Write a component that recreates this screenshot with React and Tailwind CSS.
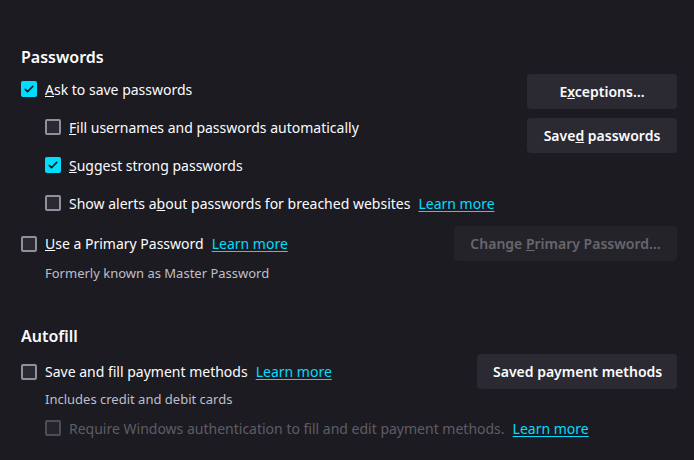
import React from 'react';

const Check = ({ checked, disabled }) => {
  if (checked) {
    return (
      <span className="flex h-4 w-4 shrink-0 items-center justify-center rounded-[2px] bg-[#00ddff]">
        <svg viewBox="0 0 16 16" className="h-3 w-3" fill="none" stroke="#1c1b22" strokeWidth="2.2" strokeLinecap="round" strokeLinejoin="round">
          <path d="M3 8.5l3 3 7-7" />
        </svg>
      </span>
    );
  }
  return (
    <span
      className={
        disabled
          ? 'h-4 w-4 shrink-0 rounded-[2px] border-2 border-[#4e4d55] bg-[#25242b]'
          : 'h-4 w-4 shrink-0 rounded-[2px] border-2 border-[#8f8f9d] bg-[#2b2a33]'
      }
    />
  );
};

const Link = () => (
  <a href="#" className="ml-2 text-[#00ddff] underline underline-offset-2">Learn more</a>
);

const Button = ({ children, className = '', disabled }) => (
  <button
    className={
      (disabled
        ? 'bg-[#24232a] text-[#67666e] '
        : 'bg-[#2b2a33] text-[#fbfbfe] ') +
      'h-[35px] whitespace-nowrap rounded-[4px] px-4 text-[14px] font-semibold ' +
      className
    }
  >
    {children}
  </button>
);

const Row = ({ checked, disabled, indent, children }) => (
  <div className={'flex h-[38px] items-center gap-2 ' + (indent ? 'pl-6' : '')}>
    <Check checked={checked} disabled={disabled} />
    <span className={disabled ? 'text-[#5e5d66]' : ''}>{children}</span>
  </div>
);

export default function App() {
  return (
    <div
      className="min-h-screen bg-[#1c1b22] pl-[21px] pr-[17px] pt-[44px] text-[14px] text-[#fbfbfe]"
      style={{ fontFamily: '"Noto Sans", "Open Sans", sans-serif' }}
    >
      <h2 className="text-[16px] font-semibold leading-[26px]">Passwords</h2>

      <div className="flex justify-between">
        <div>
          <Row checked>
            <u>A</u>sk to save passwords
          </Row>
          <Row indent>
            <u>F</u>ill usernames and passwords automatically
          </Row>
          <Row indent checked>
            <u>S</u>uggest strong passwords
          </Row>
          <Row indent>
            Show alerts a<u>b</u>out passwords for breached websites
            <Link />
          </Row>
        </div>
        <div className="mt-[4px] flex w-[150px] flex-col gap-[9px]">
          <Button>
            E<u>x</u>ceptions…
          </Button>
          <Button>
            Save<u>d</u> passwords
          </Button>
        </div>
      </div>

      <div className="mt-[4px] flex items-center justify-between">
        <div className="flex items-center gap-2">
          <Check />
          <span>
            <u>U</u>se a Primary Password
            <Link />
          </span>
        </div>
        <Button disabled className="w-[223px]">
          Change <u>P</u>rimary Password…
        </Button>
      </div>
      <p className="mt-[2px] pl-6 text-[13px] leading-[20px] text-[#bfbfc9]">Formerly known as Master Password</p>

      <h2 className="mt-[40px] text-[16px] font-semibold leading-[26px]">Autofill</h2>

      <div className="mt-[5px] flex items-center justify-between">
        <div className="flex items-center gap-2">
          <Check />
          <span>
            Save and fill payment methods
            <Link />
          </span>
        </div>
        <Button className="w-[200px]">Saved payment methods</Button>
      </div>
      <p className="pl-6 text-[13px] leading-[20px] text-[#bfbfc9]">Includes credit and debit cards</p>
      <div className="flex h-[38px] items-center gap-2 pl-6">
        <Check disabled />
        <span className="text-[#5e5d66]">
          Require Windows authentication to fill and edit payment methods.
          <Link />
        </span>
      </div>
    </div>
  );
}
